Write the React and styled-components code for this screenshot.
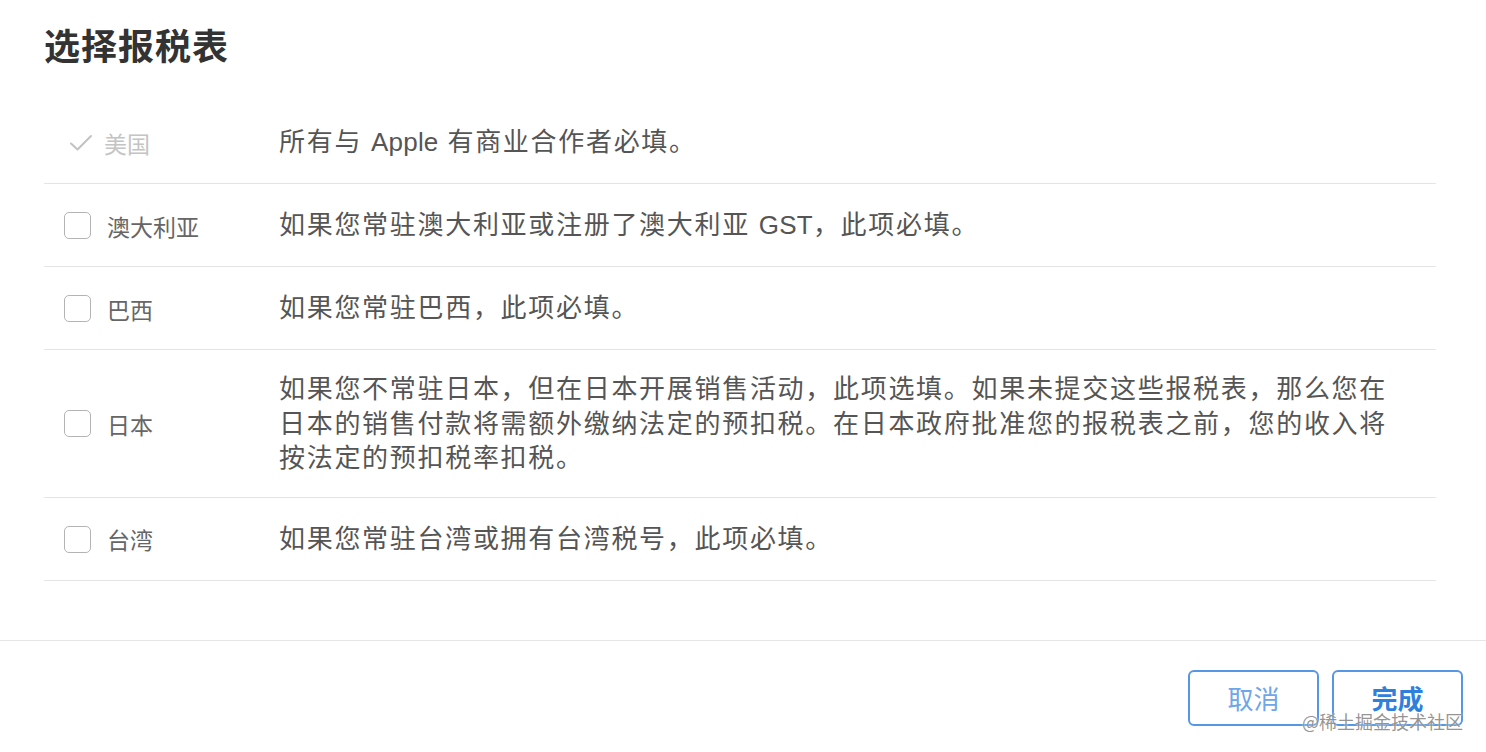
import React from "react";
import styled, { createGlobalStyle } from "styled-components";

const GlobalStyle = createGlobalStyle`
  html, body {
    margin: 0;
    padding: 0;
    background: #fff;
  }
  body {
    font-family: "Liberation Sans", "Noto Sans CJK SC", sans-serif;
    color: #555;
  }
`;

const forms = [
  {
    id: "us",
    name: "美国",
    required: true,
    text: "所有与 Apple 有商业合作者必填。"
  },
  {
    id: "au",
    name: "澳大利亚",
    text: "如果您常驻澳大利亚或注册了澳大利亚 GST，此项必填。"
  },
  {
    id: "br",
    name: "巴西",
    text: "如果您常驻巴西，此项必填。"
  },
  {
    id: "jp",
    name: "日本",
    text:
      "如果您不常驻日本，但在日本开展销售活动，此项选填。如果未提交这些报税表，那么您在日本的销售付款将需额外缴纳法定的预扣税。在日本政府批准您的报税表之前，您的收入将按法定的预扣税率扣税。"
  },
  {
    id: "tw",
    name: "台湾",
    text: "如果您常驻台湾或拥有台湾税号，此项必填。"
  }
];

const CheckMark = () => (
  <svg width="24" height="20" viewBox="0 0 24 20">
    <path d="M2 10.5 L8.5 16.5 L22 3" fill="none" stroke="#c2c2c2" strokeWidth="2" strokeLinecap="round" strokeLinejoin="round" />
  </svg>
);

// latin words get tighter spacing than the CJK text around them
const renderText = text =>
  text.split(/([A-Za-z]+)/).map((part, i) =>
    /^[A-Za-z]+$/.test(part) ? <Latin key={i}>{part}</Latin> : part
  );

export default function App() {
  return (
    <Page>
      <GlobalStyle />
      <Body>
        <Title>选择报税表</Title>
        <List>
          {forms.map(f => (
            <Row key={f.id}>
              <Label disabled={f.required}>
                {f.required ? (
                  <Tick>
                    <CheckMark />
                  </Tick>
                ) : (
                  <Box />
                )}
                <Name disabled={f.required}>{f.name}</Name>
              </Label>
              <Desc>{renderText(f.text)}</Desc>
            </Row>
          ))}
        </List>
      </Body>
      <Footer>
        <Button>取消</Button>
        <Button primary>完成</Button>
      </Footer>
      <Watermark>@稀土掘金技术社区</Watermark>
    </Page>
  );
}

const Page = styled.div`
  position: relative;
  width: 1486px;
  height: 752px;
  overflow: hidden;
  background: #fff;
`;

const Body = styled.div`
  padding: 24px 50px 0 44px;
`;

const Title = styled.h1`
  margin: 0;
  font-size: 36px;
  line-height: 48px;
  font-weight: 700;
  color: #333;
  letter-spacing: 1px;
`;

const List = styled.div`
  margin-top: 29px;
  margin-bottom: 59px;
`;

const Row = styled.div`
  display: grid;
  grid-template-columns: 235px 1fr;
  align-items: center;
  box-sizing: border-box;
  min-height: 83px;
  padding: 22px 0 21px;
  border-bottom: 1.5px solid #e4e4e4;
`;

const Label = styled.div`
  display: flex;
  align-items: center;
  gap: ${p => (p.disabled ? "10px" : "16px")};
  padding-left: ${p => (p.disabled ? "24px" : "20px")};
`;

const Tick = styled.span`
  display: flex;
  width: 26px;
  justify-content: center;
`;

const Box = styled.span`
  width: 27px;
  height: 27px;
  box-sizing: border-box;
  border: 1.5px solid #b4b4b4;
  border-radius: 5px;
  background: #fff;
  flex: none;
`;

const Name = styled.span`
  font-family: "Noto Sans CJK SC", sans-serif;
  font-size: 23px;
  line-height: 30px;
  color: ${p => (p.disabled ? "#c4c4c4" : "#666")};
`;

const Desc = styled.div`
  font-size: 26px;
  line-height: 34.5px;
  letter-spacing: 1.7px;
  color: #555;
  padding-right: 30px;
`;

const Latin = styled.span`
  letter-spacing: 0.2px;
`;

const Footer = styled.div`
  display: flex;
  justify-content: flex-end;
  gap: 13px;
  padding: 29px 23px 0;
  border-top: 1.5px solid #e6e6e6;
`;

const Button = styled.button`
  width: 131px;
  height: 56px;
  box-sizing: border-box;
  border: 2px solid #5597e4;
  border-radius: 6px;
  background: #fff;
  font-family: "Noto Sans CJK SC", sans-serif;
  font-size: 26px;
  font-weight: ${p => (p.primary ? 700 : 400)};
  color: ${p => (p.primary ? "#2f7fdc" : "#6ea6e8")};
  cursor: pointer;
  padding: 0;
`;

const Watermark = styled.div`
  position: absolute;
  right: 23px;
  bottom: 20px;
  font-family: "Noto Sans CJK SC", sans-serif;
  font-size: 18px;
  line-height: 22px;
  color: rgba(130, 130, 130, 0.85);
  text-shadow: 0 0 2px #fff;
`;
